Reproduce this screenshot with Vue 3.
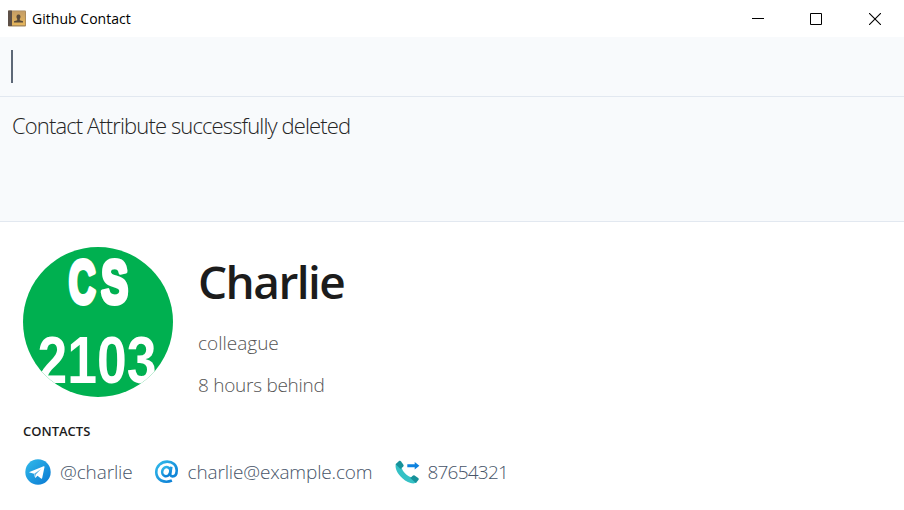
<script setup>
const title = 'Github Contact'
const message = 'Contact Attribute successfully deleted'
const person = { name: 'Charlie', role: 'colleague', offset: '8 hours behind' }
const contacts = [
  { kind: 'telegram', value: '@charlie' },
  { kind: 'email', value: 'charlie@example.com' },
  { kind: 'phone', value: '87654321' },
]
</script>

<template>
  <div class="window">
    <header class="titlebar">
      <svg class="app-icon" width="18" height="17" viewBox="0 0 18 17">
        <defs>
          <linearGradient id="cover" x1="0" y1="0" x2="0" y2="1">
            <stop offset="0" stop-color="#c49d66" />
            <stop offset="1" stop-color="#e6b65c" />
          </linearGradient>
        </defs>
        <rect x="0" y="0.5" width="18" height="16" rx="1" fill="#a3855a" />
        <rect x="0" y="0.500" width="4" height="15.500" rx="0.600" fill="#5d5048" />
        <rect x="4" y="1.200" width="13.200" height="14" fill="url(#cover)" />
        <path d="M6 12.500v-1.300l3.200-1V8.800C8 7.300 8.300 4.500 10.500 4.500S13 7.300 11.800 8.800v1.400l3.200 1v1.300z" fill="#594a39" />
      </svg>
      <span class="title">{{ title }}</span>
      <div class="controls">
        <svg width="12" height="12" viewBox="0 0 12 12"><path d="M0 5.500H12" stroke="#000" /></svg>
        <svg width="12" height="12" viewBox="0 0 12 12"><path d="M.5.5h11v11H.5z" fill="none" stroke="#000" /></svg>
        <svg width="12" height="12" viewBox="0 0 12 12"><path d="M0 0 12 12M12 0 0 12" stroke="#000" stroke-width="1.100" /></svg>
      </div>
    </header>

    <div class="command"><i class="caret"></i></div>
    <div class="result"><span class="message">{{ message }}</span></div>

    <main class="details">
      <section class="profile">
        <svg class="avatar" width="150" height="150" viewBox="0 0 150 150">
          <defs>
            <clipPath id="round"><circle cx="75" cy="75" r="75" /></clipPath>
          </defs>
          <g clip-path="url(#round)">
            <rect width="150" height="150" fill="#00b050" />
            <g fill="#fff" font-family="'Liberation Sans', Arial, sans-serif" font-weight="700">
              <g font-size="61" stroke="#fff" stroke-width="5" stroke-linejoin="round" text-anchor="middle">
                <text transform="translate(59.300 56) scale(.61 1)">C</text>
                <text transform="translate(91.700 56) scale(.66 1)">S</text>
              </g>
              <text x="14.500" y="136" font-size="66" textLength="119" lengthAdjust="spacingAndGlyphs">2103</text>
            </g>
          </g>
        </svg>
        <div class="summary">
          <h1 class="name">{{ person.name }}</h1>
          <p class="role">{{ person.role }}</p>
          <p class="offset">{{ person.offset }}</p>
        </div>
      </section>

      <h2 class="heading">CONTACTS</h2>
      <ul class="contacts">
        <li v-for="c in contacts" :key="c.kind" :class="c.kind">
          <svg v-if="c.kind === 'telegram'" width="26" height="26" viewBox="0 0 26 26">
            <defs>
              <linearGradient id="tg" x1="0" y1="0" x2="1" y2="1">
                <stop offset="0" stop-color="#32bbea" />
                <stop offset="1" stop-color="#0878d3" />
              </linearGradient>
            </defs>
            <circle cx="13" cy="13" r="12.700" fill="url(#tg)" />
            <path d="M4.500 12.900 18.600 7.300c.7-.25 1 .1.9.7l-2.300 11c-.15.7-.6.85-1.200.45l-3.500-2.600-1.700 1.700c-.5.4-.8.200-.9-.3l-.9-3.500-4.300-1.300c-.6-.200-.6-.4-.200-.55z" fill="#fff" />
            <path d="M9.200 14.700 16 9.900l-5.200 5.500-.6 2.700z" fill="#58b0e4" />
          </svg>
          <svg v-else-if="c.kind === 'email'" width="26" height="26" viewBox="0 0 26 26">
            <defs>
              <linearGradient id="at" x1="0" y1="0" x2="1" y2="1">
                <stop offset="0" stop-color="#32bbea" />
                <stop offset="1" stop-color="#0878d3" />
              </linearGradient>
            </defs>
            <g transform="translate(.4 .8) scale(.93)" fill="none" stroke="url(#at)" stroke-width="2.800">
              <path d="M18.800 22.300C10.500 26 2 21.400 2 13.500 2 6.800 7.300 2 13.800 2c5.900 0 10.200 3.700 10.200 9.200 0 4.100-1.900 6.600-4.500 6.600-1.900 0-2.700-1.300-2.400-3.300l1.100-7" />
              <ellipse cx="12.700" cy="12.700" rx="4.300" ry="5" transform="rotate(18 12.700 12.700)" />
            </g>
          </svg>
          <svg v-else width="26" height="26" viewBox="0 0 26 26">
            <path d="M2 4.500C.3 9 3.700 15 8.400 19.200c4.700 4.200 10.300 6.500 14.300 4.400l-6-5.600C12.500 16.700 8.800 12.500 7.700 9z" fill="#35c1c5" />
            <path d="M1.600 5.200 5 2.100c.8-.6 1.500-.5 2.100.3l2.300 3.400c.4.700.3 1.300-.3 1.900L6.500 10z" fill="#17919a" />
            <path d="m16.300 19 2.400-2.300c.6-.6 1.200-.7 1.900-.2l3.600 2.400c.7.600.8 1.300.2 2l-2.500 3z" fill="#17919a" />
            <path d="M13.300 5.200h7.400V3l4.700 3.700-4.700 3.700V8.200h-7.400z" fill="#0d82df" />
          </svg>
          <span>{{ c.value }}</span>
        </li>
      </ul>
    </main>
  </div>
</template>

<style>
body { margin: 0; background: #fff; }
</style>

<style scoped>
.window {
  width: 904px;
  height: 510px;
  overflow: hidden;
  background: #fff;
  font-family: 'Open Sans', 'Noto Sans', sans-serif;
  font-weight: 300;
  box-sizing: border-box;
}
.titlebar {
  display: flex;
  align-items: center;
  height: 37px;
  padding: 0 23px 0 8px;
  box-sizing: border-box;
}
.app-icon { flex: none; }
.title {
  margin-left: 6px;
  font-size: 14px;
  font-weight: 400;
  line-height: 20px;
  letter-spacing: 0.030px;
  color: #000;
}
.controls { display: flex; gap: 47px; margin-left: auto; }
.controls svg { display: block; }
.controls svg:first-child { margin-right: -1px; }
.command {
  height: 60px;
  padding: 13px 11px;
  box-sizing: border-box;
  background: #f8fafc;
  border-bottom: 1px solid #e2e8f0;
}
.caret { display: block; width: 2px; height: 33px; background: #5d6877; }
.result {
  height: 125px;
  padding: 12px 12px;
  box-sizing: border-box;
  background: #f8fafc;
  border-bottom: 1px solid #e2e8f0;
}
.message {
  display: block;
  font-size: 22px;
  line-height: 32px;
  letter-spacing: -0.880px;
  color: #252525;
  white-space: nowrap;
}
.details { padding: 25px 23px 0; }
.profile { display: flex; gap: 25px; }
.avatar { display: block; flex: none; }
.summary { white-space: nowrap; }
.name {
  margin: 2px 0 0;
  font-size: 46px;
  font-weight: 600;
  line-height: 64px;
  letter-spacing: -1.550px;
  color: #1c1c1c;
}
.role, .offset {
  margin: 15px 0 0;
  font-size: 19px;
  line-height: 27px;
  color: #555;
}
.role { margin-top: 17px; }
.offset { letter-spacing: -0.270px; }
.heading {
  margin: 23px 0 0;
  font-size: 13px;
  font-weight: 600;
  line-height: 18px;
  color: #1c1c1c;
}
.contacts {
  display: flex;
  margin: 18px 0 0;
  padding: 0 0 0 2px;
  list-style: none;
  gap: 21.500px;
}
.contacts li {
  display: flex;
  align-items: center;
  gap: 9px;
  font-size: 19px;
  line-height: 28px;
  letter-spacing: -0.120px;
  color: #475569;
}
.contacts .email { gap: 7.500px; letter-spacing: -0.160px; }
.contacts .phone { gap: 7.500px; letter-spacing: -0.750px; }
.contacts svg { flex: none; }
</style>
